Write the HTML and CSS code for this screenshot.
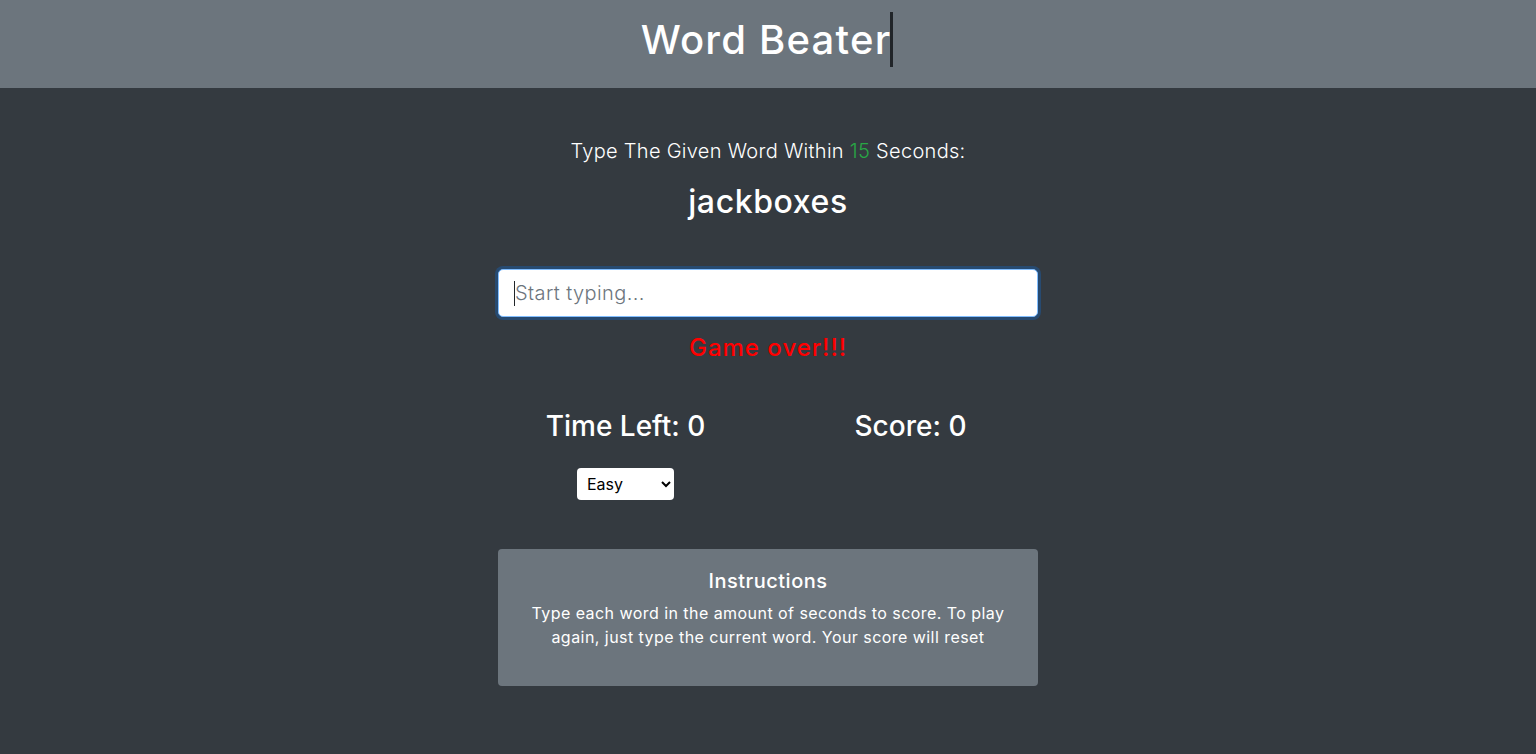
FILE: index.html
```html
<!DOCTYPE html>
<html lang="en">
<head>
<meta charset="utf-8">
<title>Word Beater</title>
<link rel="stylesheet" href="styles.css">
</head>
<body>
<header class="topbar">
  <h1 class="title">Word Beater<span class="typed-cursor"></span></h1>
</header>
<main class="game">
  <p class="lead">Type The Given Word Within <span class="seconds">15</span> Seconds:</p>
  <h2 class="current-word">jackboxes</h2>
  <div class="input-wrap"><span class="caret"></span><input class="word-input" type="text" placeholder="Start typing..."></div>
  <h4 class="message">Game over!!!</h4>
  <div class="stats">
    <div class="stat-col">
      <h3 class="stat">Time Left: <span>0</span></h3>
      <select class="level">
        <option>Easy</option>
        <option>Medium</option>
        <option>Hard</option>
      </select>
    </div>
    <div class="stat-col">
      <h3 class="stat">Score: <span>0</span></h3>
    </div>
  </div>
  <section class="card">
    <h5 class="card-title">Instructions</h5>
    <p class="card-text">Type each word in the amount of seconds to score. To play again, just type the current word. Your score will reset</p>
  </section>
</main>
</body>
</html>
```
FILE: styles.css
```css
* { box-sizing: border-box; }
html, body { margin: 0; padding: 0; }
body {
  background: #343a40;
  color: #fff;
  font-family: Inter, "Open Sans", "Liberation Sans", sans-serif;
  height: 754px;
  overflow: hidden;
}
.topbar {
  background: #6c757d;
  height: 88px;
  padding: 16px 0 24px;
  text-align: center;
}
.title {
  margin: 0 0 0 -4px;
  font-size: 40px;
  font-weight: 500;
  line-height: 48px;
  letter-spacing: 1.2px;
  position: relative;
  display: inline-block;
}
.typed-cursor {
  position: absolute;
  right: -2px;
  top: -4px;
  width: 3px;
  height: 55px;
  background: #212529;
}
.game {
  width: 540px;
  margin: 0 auto;
  padding-top: 48px;
  text-align: center;
}
.lead {
  margin: 0;
  font-size: 20px;
  line-height: 30px;
  font-weight: 300;
  letter-spacing: 0.3px;
}
.seconds { color: #28a745; }
.current-word {
  margin: 17px 0 0;
  font-size: 32px;
  line-height: 38px;
  font-weight: 500;
  letter-spacing: 0.6px;
}
.input-wrap {
  position: relative;
  margin-top: 48px;
}
.word-input {
  display: block;
  width: 540px;
  height: 48px;
  padding: 8px 16px;
  font-family: inherit;
  font-size: 20px;
  letter-spacing: 0.4px;
  color: #495057;
  background: #fff;
  border: 1px solid #80bdff;
  border-radius: 5px;
  box-shadow: 0 0 0 3px rgba(0, 123, 255, 0.25);
  outline: none;
}
.word-input::placeholder { color: #6c757d; font-weight: 300; }
.caret {
  position: absolute;
  left: 16px;
  top: 12px;
  width: 1px;
  height: 25px;
  background: #212529;
}
.message {
  margin: 16px 0 0;
  font-size: 24px;
  line-height: 29px;
  font-weight: 500;
  letter-spacing: 1px;
  color: #ff0000;
}
.stats {
  display: grid;
  grid-template-columns: 1fr 1fr;
  margin: 47px -15px 0;
}
.stat-col {
  display: flex;
  flex-direction: column;
  align-items: center;
}
.stat {
  margin: 0;
  font-size: 28px;
  line-height: 34px;
  font-weight: 500;
}
.level {
  margin-top: 25px;
  width: 97px;
  height: 32px;
  padding: 0 6px;
  font-family: inherit;
  font-size: 16px;
  color: #000;
  background: #fff;
  border: none;
  border-radius: 4px;
}
.card {
  margin-top: 49px;
  height: 137px;
  background: #6c757d;
  border-radius: 4px;
  padding: 20px 26px;
}
.card-title {
  margin: 0 0 8px;
  font-size: 20px;
  line-height: 24px;
  font-weight: 500;
  letter-spacing: 0.5px;
}
.card-text {
  margin: 0;
  font-size: 16px;
  line-height: 24px;
  letter-spacing: 0.45px;
}
```
